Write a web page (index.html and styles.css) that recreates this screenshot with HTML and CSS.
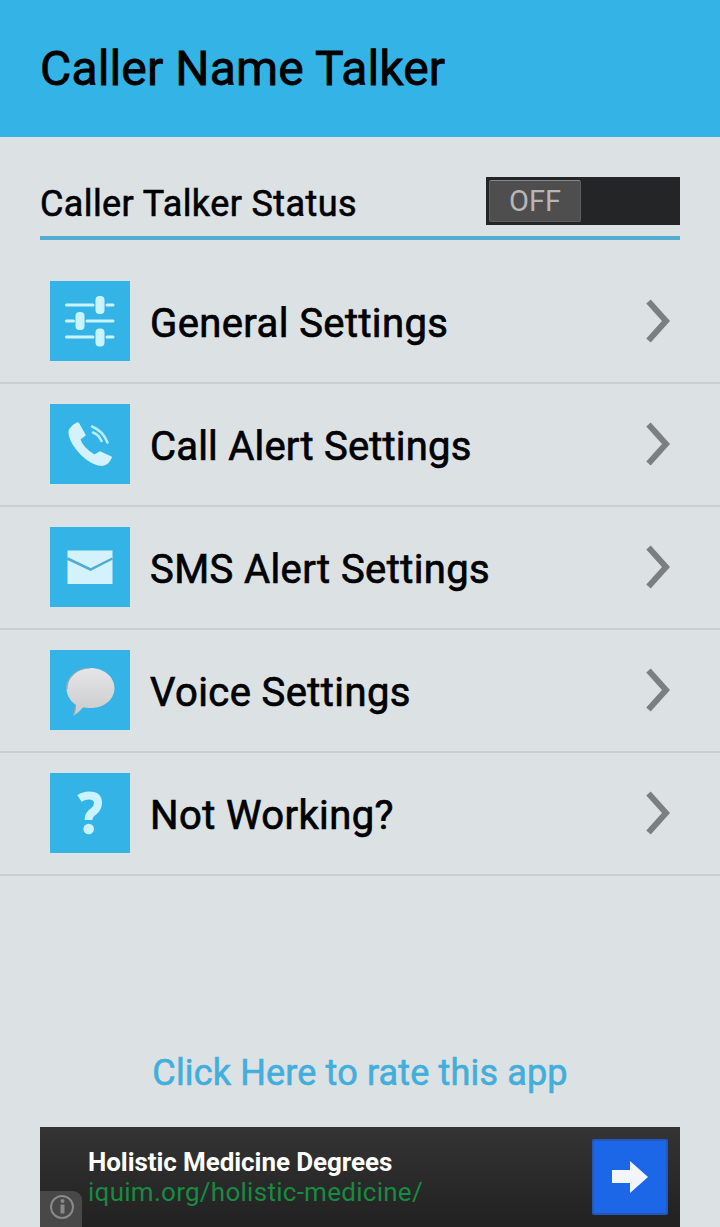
FILE: index.html
```html
<!DOCTYPE html>
<html lang="en">
<head>
  <meta charset="UTF-8">
  <meta name="viewport" content="width=device-width, initial-scale=1.0">
  <title>Caller Name Talker</title>
  <link rel="stylesheet" href="styles.css">
</head>
<body>
  <header class="header">
    <h1>Caller Name Talker</h1>
  </header>

  <div class="status">
    <span class="status-label">Caller Talker Status</span>
    <div class="switch"><span class="thumb">OFF</span></div>
  </div>

  <ul class="menu">
    <li class="row">
      <svg class="icon" viewBox="0 0 80 80">
        <path d="M16.500 24H43M57 24H63M16.500 40H23.500M37 40H63M16.500 56H43M57 56H63" stroke="#c9f3ff" stroke-width="3" stroke-linecap="round"/>
        <g fill="#c9f3ff">
          <rect x="45.500" y="15" width="9" height="18" rx="4"/>
          <rect x="25.500" y="31" width="9" height="18" rx="4"/>
          <rect x="45.500" y="47.500" width="9" height="18" rx="4"/>
        </g>
      </svg>
      <span class="label">General Settings</span>
      <svg class="arrow" viewBox="0 0 24 44"><path d="M2.500 2.500L20 22L2.500 41.500"/></svg>
    </li>
    <li class="row">
      <svg class="icon" viewBox="0 0 80 80">
        <path d="M27 18.500Q28 18 29 19L35.500 30.500Q36 31.500 35 32L30.500 35.500Q33 43.500 44.500 50.500L49.500 47.500Q50.500 47 51.500 48L61.500 52.500Q62.500 53 61.500 54.500Q58 61.500 52 62Q42 61.500 32 52Q18 38 18.500 27Q20 22 27 18.500Z" fill="#d3f2fc"/>
        <path d="M43 28.500Q49 31 51.500 37M42 22.500Q53 27 57.500 38.500" fill="none" stroke="#b9ecfb" stroke-width="2.500" stroke-linecap="round"/>
      </svg>
      <span class="label call">Call Alert Settings</span>
      <svg class="arrow" viewBox="0 0 24 44"><path d="M2.500 2.500L20 22L2.500 41.500"/></svg>
    </li>
    <li class="row">
      <svg class="icon" viewBox="0 0 80 80">
        <rect x="17.500" y="23.500" width="45" height="33.500" fill="#d3f2fc"/>
        <path d="M17.500 31.500L40.500 42.500L62.500 31.500" fill="none" stroke="#50acd0" stroke-width="2.500"/>
      </svg>
      <span class="label">SMS Alert Settings</span>
      <svg class="arrow" viewBox="0 0 24 44"><path d="M2.500 2.500L20 22L2.500 41.500"/></svg>
    </li>
    <li class="row">
      <svg class="icon" viewBox="0 0 80 80">
        <defs>
          <linearGradient id="bubble" x1="0" y1="0" x2="0" y2="1">
            <stop offset="0" stop-color="#e6e6e8"/>
            <stop offset="1" stop-color="#c9cacc"/>
          </linearGradient>
        </defs>
        <path d="M40.500 18C54 18 64.500 27 64.500 38C64.500 49.500 54 58 41 58C37 58 35 57.500 33 57.500Q29 62.500 23 66Q25.500 61 25.500 54.500C20 51 16.500 45 16.500 38C16.500 27 27 18 40.500 18Z" fill="url(#bubble)"/>
        <path d="M17 39C16.500 27 27 18 40.500 18M25.500 54.500Q25.500 60 23.500 65" fill="none" stroke="#8aa7b3" stroke-width="1.200"/>
      </svg>
      <span class="label">Voice Settings</span>
      <svg class="arrow" viewBox="0 0 24 44"><path d="M2.500 2.500L20 22L2.500 41.500"/></svg>
    </li>
    <li class="row">
      <svg class="icon" viewBox="0 0 80 80">
        <path d="M29.500 25.500Q34 22.500 39 22.500Q48 22.500 48 30Q48 35 43.500 38.500Q38.500 41.500 38.500 47" fill="none" stroke="#c9f3ff" stroke-width="8"/>
        <circle cx="38.700" cy="56" r="5.300" fill="#c9f3ff"/>
      </svg>
      <span class="label">Not Working?</span>
      <svg class="arrow" viewBox="0 0 24 44"><path d="M2.500 2.500L20 22L2.500 41.500"/></svg>
    </li>
  </ul>

  <a class="rate" href="#">Click Here to rate this app</a>

  <div class="ad">
    <div class="ad-text">
      <div class="ad-title">Holistic Medicine Degrees</div>
      <div class="ad-url">iquim.org/holistic-medicine/</div>
    </div>
    <div class="ad-button">
      <svg width="36" height="32" viewBox="0 0 36 32"><path d="M0 9H18V0L36 16L18 32V22H0Z" fill="#f2f5fb"/></svg>
    </div>
    <div class="ad-info">
      <svg width="26" height="26" viewBox="0 0 26 26">
        <circle cx="13" cy="13" r="11" fill="none" stroke="#898989" stroke-width="2"/>
        <path d="M13.500 10.500V19.500" fill="none" stroke="#898989" stroke-width="4"/>
        <circle cx="13.500" cy="7" r="2" fill="#898989"/>
      </svg>
    </div>
  </div>
</body>
</html>
```
FILE: styles.css
```css
* {
  box-sizing: border-box;
}
body {
  font-family: Roboto, "Liberation Sans", sans-serif;
  background: #dce1e4;
  color: #000;
  margin: 0;
  height: 1227px;
  overflow: hidden;
}
.header {
  height: 137px;
  background: #34b4e6;
  padding: 40px 40px 0;
}
h1 {
  margin: 0;
  font-size: 48px;
  line-height: 57px;
  font-weight: 400;
  letter-spacing: 0.15px;
  -webkit-text-stroke: 0.8px #000;
}
.status {
  display: flex;
  justify-content: space-between;
  align-items: flex-start;
  margin: 40px 40px 0;
  height: 63px;
  border-bottom: 4px solid #52adcf;
}
.status-label {
  font-size: 36px;
  line-height: 54px;
  letter-spacing: 0.4px;
  -webkit-text-stroke: 0.6px #000;
}
.switch {
  width: 194px;
  height: 48px;
  padding: 3px;
  background: #242526;
}
.thumb {
  display: block;
  width: 92px;
  height: 42px;
  background: #4e4e4e;
  border: 1px solid #5f5f5f;
  border-top-color: #858585;
  border-radius: 2px;
  color: #b7b7b7;
  font-size: 29px;
  line-height: 41px;
  text-align: center;
}
.menu {
  list-style: none;
  margin: 21px 0 0;
  padding: 0;
}
.row {
  display: flex;
  height: 123px;
  padding: 20px 50px 0;
  border-bottom: 2px solid #cacfd2;
}
.icon {
  width: 80px;
  height: 80px;
  background: #34b4e6;
}
.label {
  flex: 1;
  margin-left: 20px;
  font-size: 40px;
  line-height: 86px;
  letter-spacing: 0.4px;
  -webkit-text-stroke: 0.7px #000;
}
.call {
  letter-spacing: 0.2px;
}
.arrow {
  width: 24px;
  height: 44px;
  margin-top: 18px;
  fill: none;
  stroke: #7b7f81;
  stroke-width: 6px;
}
.rate {
  display: block;
  margin-top: 172px;
  height: 79px;
  text-align: center;
  font-size: 36px;
  line-height: 50px;
  letter-spacing: 0.15px;
  color: #42aedb;
  text-decoration: none;
  -webkit-text-stroke: 0.6px #42aedb;
}
.ad {
  position: relative;
  display: flex;
  justify-content: space-between;
  margin: 0 40px;
  height: 100px;
  padding: 12px 12px 0 48px;
  background: linear-gradient(#343434, #212121);
}
.ad-text {
  padding-top: 8px;
  font-size: 26px;
  line-height: 30px;
}
.ad-title {
  color: #fff;
  font-weight: 700;
  letter-spacing: -0.08px;
}
.ad-url {
  color: #188a42;
  letter-spacing: 0.27px;
}
.ad-button {
  display: flex;
  align-items: center;
  justify-content: center;
  width: 76px;
  height: 76px;
  background: #1b67e8;
  border: 2px solid #2458bd;
  border-radius: 2px;
}
.ad-info {
  position: absolute;
  left: 0;
  bottom: 0;
  width: 42px;
  height: 36px;
  padding: 3px 0 0 9px;
  background: #484848;
  border-top-right-radius: 9px;
}
```
